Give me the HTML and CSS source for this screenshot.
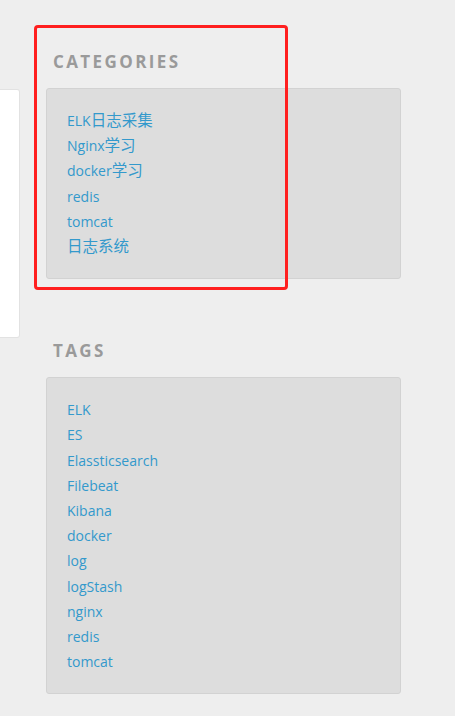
FILE: index.html
```html
<!DOCTYPE html>
<html lang="zh">
<head>
<meta charset="utf-8">
<link rel="stylesheet" href="styles.css">
</head>
<body>
<div class="page">
  <div class="main-panel"></div>
  <aside class="sidebar">
    <section class="widget">
      <h3 class="widget-title">CATEGORIES</h3>
      <ul class="widget-box">
        <li><a href="#">ELK<span class="cjk">日志采集</span></a></li>
        <li><a href="#">Nginx<span class="cjk">学习</span></a></li>
        <li><a href="#">docker<span class="cjk">学习</span></a></li>
        <li><a href="#">redis</a></li>
        <li><a href="#">tomcat</a></li>
        <li><a href="#"><span class="cjk">日志系统</span></a></li>
      </ul>
    </section>
    <section class="widget widget-tags">
      <h3 class="widget-title">TAGS</h3>
      <ul class="widget-box">
        <li><a href="#">ELK</a></li>
        <li><a href="#">ES</a></li>
        <li><a href="#">Elassticsearch</a></li>
        <li><a href="#">Filebeat</a></li>
        <li><a href="#">Kibana</a></li>
        <li><a href="#">docker</a></li>
        <li><a href="#">log</a></li>
        <li><a href="#">logStash</a></li>
        <li><a href="#">nginx</a></li>
        <li><a href="#">redis</a></li>
        <li><a href="#">tomcat</a></li>
      </ul>
    </section>
  </aside>
  <div class="highlight"></div>
</div>
</body>
</html>
```

FILE: styles.css
```css
html, body {
  margin: 0;
  padding: 0;
  background: #eeeeee;
}
body {
  font-family: "Open Sans", "Noto Sans CJK SC", sans-serif;
  width: 455px;
  height: 716px;
  overflow: hidden;
}
.page {
  position: relative;
  display: flex;
  align-items: flex-start;
  gap: 26px;
}
.main-panel {
  width: 19px;
  height: 247px;
  margin-top: 89px;
  background: #ffffff;
  border: 1px solid #e2e2e2;
  border-left: none;
  border-radius: 0 3px 3px 0;
}
.sidebar {
  width: 355px;
  padding-top: 50px;
}
.widget-title {
  margin: 0 0 14px 0;
  padding-left: 7px;
  font-size: 17px;
  line-height: 24px;
  font-weight: 700;
  letter-spacing: 2.4px;
  color: #9a9a9a;
}
.widget-box {
  list-style: none;
  margin: 0;
  padding: 19px 20px;
  background: #dddddd;
  border: 1px solid #d2d2d2;
  border-radius: 3px;
}
.widget-box li {
  font-size: 14px;
  line-height: 25.2px;
}
.widget-box a {
  color: #3399cc;
  text-decoration: none;
}
.cjk {
  font-size: 15.5px;
  line-height: 1;
}
.widget-tags {
  margin-top: 60px;
}
.highlight {
  position: absolute;
  left: 34px;
  top: 25px;
  width: 248px;
  height: 259px;
  border: 3px solid #ff1f1f;
  border-radius: 4px;
}
```
